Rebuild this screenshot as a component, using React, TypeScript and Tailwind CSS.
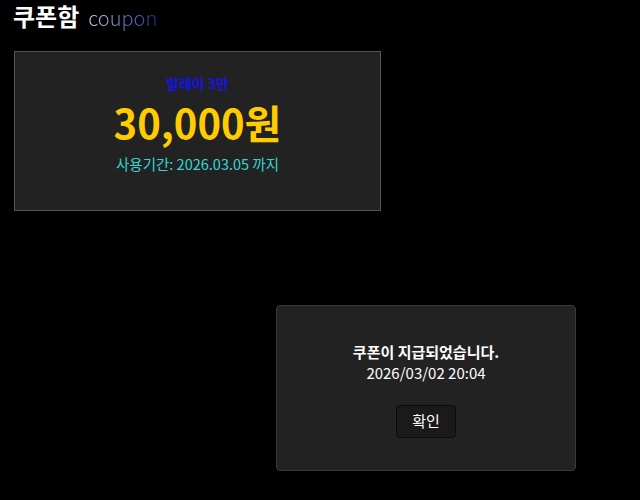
import { useState } from 'react';

const font = { fontFamily: '"Noto Sans CJK KR", "Noto Sans", sans-serif' };

export default function CouponPage() {
  const [showNotice, setShowNotice] = useState(true);

  return (
    <div className="relative min-h-[500px] w-full bg-black text-white" style={font}>
      {/* 헤더 */}
      <h1 className="flex items-baseline gap-[9px] px-[13px] leading-none">
        <span className="text-[24px] font-bold leading-[32px]">쿠폰함</span>
        <span className="bg-gradient-to-r from-[#c4c4dc] to-[#2a2a96] bg-clip-text text-[20px] font-light leading-[28px] text-transparent">coupon</span>
      </h1>

      {/* 쿠폰 카드 */}
      <div className="ml-[14px] mt-[19px] flex h-[160px] w-[367px] flex-col items-center border border-[#555] bg-[#222]">
        <p className="mt-[22px] text-[14px] font-bold leading-[18px] text-[#1414e6]">릴레이 3만</p>
        <p className="mt-[5px] text-[40px] font-bold leading-[50px] text-[#ffcc00]">30,000원</p>
        <p className="mt-[7px] text-[14.5px] leading-[20px] text-[#33d6d6]">사용기간: 2026.03.05 까지</p>
      </div>

      {/* 지급 알림 */}
      {showNotice && (
        <div className="absolute left-[276px] top-[305px] flex h-[166px] w-[300px] flex-col items-center rounded-[4px] border border-[#3a3a3a] bg-[#222]">
          <p className="mt-[35px] text-[15px] font-bold leading-[21px]">쿠폰이 지급되었습니다.</p>
          <p className="mt-[0px] text-[15px] leading-[21px]">2026/03/02 20:04</p>
          <button
            onClick={() => setShowNotice(false)}
            className="mt-[22px] h-[33px] w-[60px] rounded-[4px] border border-[#0a0a0a] bg-[#1a1a1a] text-[15px] text-white"
          >
            확인
          </button>
        </div>
      )}
    </div>
  );
}
